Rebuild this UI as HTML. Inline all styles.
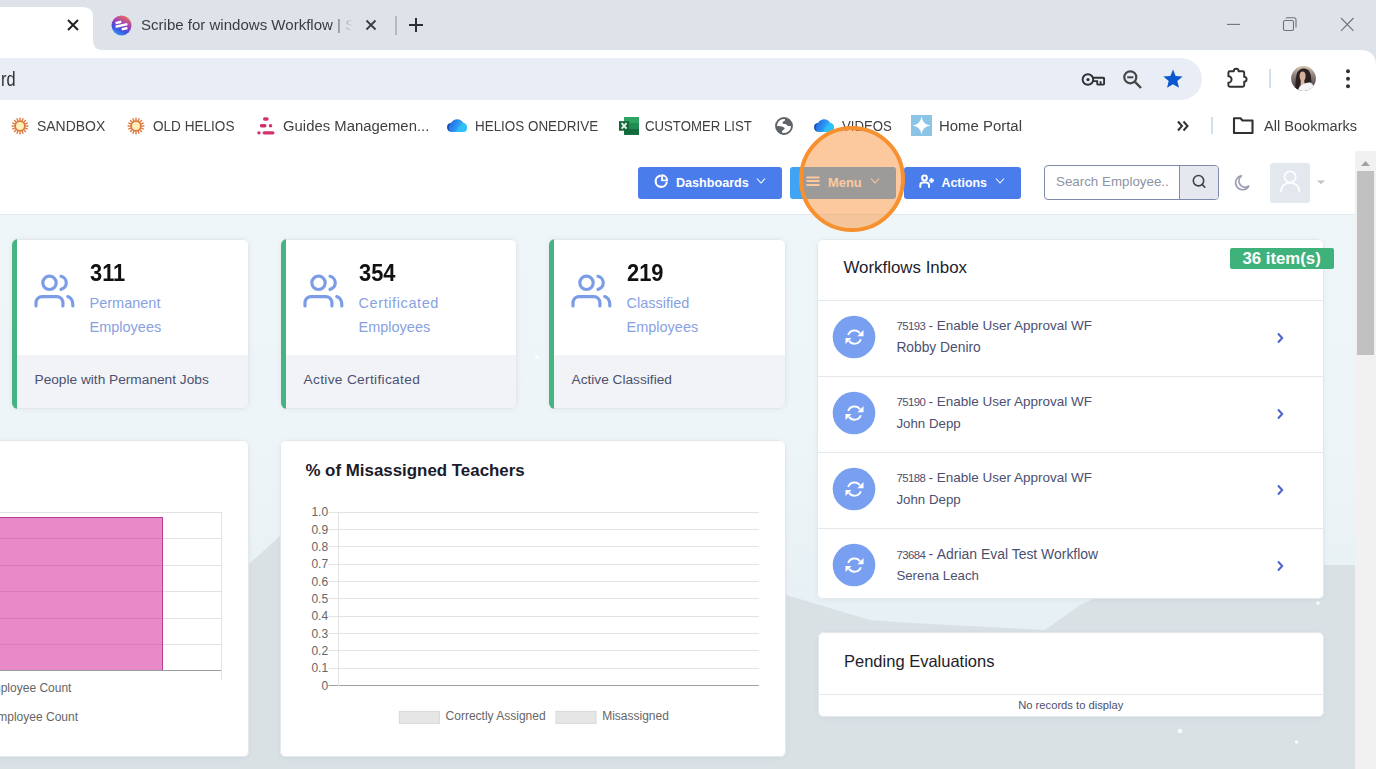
<!DOCTYPE html>
<html><head><meta charset="utf-8">
<style>
*{margin:0;padding:0;box-sizing:border-box}
html,body{width:1376px;height:769px;overflow:hidden;background:#fff;font-family:"Liberation Sans",sans-serif}
.a{position:absolute}
.nw{white-space:nowrap}
#tabs{left:0;top:0;width:1376px;height:50px;background:#dee3ea}
#omni{left:-30px;top:58px;width:1232px;height:42px;background:#e9eef6;border-radius:21px}
.bmt{font-size:15.2px;color:#3f3f3f;top:110.5px;line-height:30px;transform-origin:0 0}
#page{left:0;top:151px;width:1355px;height:618px;overflow:hidden;background:#e9f1f4}
#hdr{left:0;top:0;width:1355px;height:64px;background:#fff;border-bottom:1px solid #e3e9ee}
.btn{top:16px;height:31.5px;border-radius:3px}
.card{background:#fff;border-radius:6px;box-shadow:0 1px 4px rgba(120,140,160,.10)}
.card::after,.stat::after{content:"";position:absolute;left:0;top:0;right:0;bottom:0;border:1px solid #e4e8ec;border-radius:6px;pointer-events:none}
.stat{top:88px;height:169.5px;width:237px;overflow:hidden;border-radius:6px;background:#fff;box-shadow:0 0 5px rgba(120,140,160,.12)}
.stat .gb{left:0;top:0;width:5px;height:170px;background:#47b282;z-index:2}
.stat .ft{left:0;top:116px;width:240px;height:54px;background:#f2f3f6}
.stat .num{left:77.5px;top:20.5px;font-size:23px;font-weight:bold;color:#111;line-height:26px;transform:scaleX(0.95);transform-origin:0 0}
.stat .lbl{left:77.5px;top:52px;font-size:14.5px;color:#88a2df;line-height:24px}
.stat .ftt{left:22.5px;top:132px;font-size:13.7px;color:#4c5170;line-height:18px}
#sb{left:1355px;top:151px;width:21px;height:618px;background:#f1f1f1}
</style></head><body>
<!-- TAB STRIP -->
<div id="tabs" class="a"></div>
<svg class="a" style="left:0;top:0" width="120" height="51">
  <path d="M-10 50 L-10 17 Q-10 7 0 7 L83 7 Q93 7 93 17 L93 40 Q93 50 103 50 L108 50 L108 51 L-10 51 Z" fill="#fff"/>
</svg>
<svg class="a" style="left:66px;top:18px" width="14" height="14" viewBox="0 0 14 14"><path d="M2 2 L12 12 M12 2 L2 12" stroke="#1f1f1f" stroke-width="1.9"/></svg>
<svg class="a" style="left:110.5px;top:14.5px" width="21" height="21" viewBox="0 0 21 21">
  <defs><linearGradient id="sg" x1="0.8" y1="0.05" x2="0.35" y2="0.95"><stop offset="0" stop-color="#f07050"/><stop offset="0.45" stop-color="#9b3fc0"/><stop offset="0.75" stop-color="#3f52df"/><stop offset="1" stop-color="#3a8af0"/></linearGradient></defs>
  <circle cx="10.5" cy="10.5" r="10" fill="url(#sg)"/>
  <path d="M4.6 8.1 L10.3 6.7 M4.6 11.7 L16.4 9.1 M10.7 14.4 L16.4 13" stroke="#fff" stroke-width="2.5"/>
</svg>
<div class="a nw" style="left:140.7px;top:15.4px;font-size:15.5px;color:#3b3c3f;line-height:20px;width:220px;overflow:hidden;transform:scaleX(0.97);transform-origin:0 0;-webkit-mask-image:linear-gradient(90deg,#000 196px,transparent 218px)">Scribe for windows Workflow | Scribe</div>
<svg class="a" style="left:364px;top:18px" width="14" height="14" viewBox="0 0 14 14"><path d="M2.5 2.5 L11.5 11.5 M11.5 2.5 L2.5 11.5" stroke="#3c3d40" stroke-width="1.8"/></svg>
<div class="a" style="left:395px;top:16px;width:1.5px;height:19px;background:#b4b9c1"></div>
<svg class="a" style="left:408px;top:17px" width="16" height="16" viewBox="0 0 16 16"><path d="M8 1 L8 15 M1 8 L15 8" stroke="#2e2f32" stroke-width="2"/></svg>
<svg class="a" style="left:1220px;top:10px" width="140" height="30" viewBox="0 0 140 30">
  <path d="M7 14.4 H20" stroke="#6f7276" stroke-width="1.1"/>
  <rect x="63.5" y="10.5" width="10" height="10" rx="1.5" fill="none" stroke="#6f7276" stroke-width="1.1"/>
  <path d="M66 8.2 Q66 7.8 67.5 7.8 H74 Q76 7.8 76 9.8 V17.5" fill="none" stroke="#6f7276" stroke-width="1.1"/>
  <path d="M121 8 L133.5 20.8 M133.5 8 L121 20.8" stroke="#6f7276" stroke-width="1.1"/>
</svg>
<!-- TOOLBAR -->
<div id="omni" class="a"></div>
<div class="a nw" style="left:0.6px;top:67.1px;font-size:19.5px;color:#303030;line-height:24px;transform:scaleX(0.84);transform-origin:0 0">rd</div>
<svg class="a" style="left:1076px;top:66px" width="34" height="28" viewBox="1076 66 34 28">
  <circle cx="1087.9" cy="79.5" r="5.3" fill="none" stroke="#2f3033" stroke-width="1.9"/>
  <circle cx="1088" cy="79.6" r="1.6" fill="#2f3033"/>
  <path d="M1092.6 77.7 H1103.3 Q1104.1 77.7 1104.1 78.5 V83.8 Q1104.1 84.6 1103.3 84.6 H1098 Q1097.2 84.6 1097.2 83.8 V81.1 H1092.6 M1100.6 81.3 V84" fill="none" stroke="#2f3033" stroke-width="1.9"/>
</svg>
<svg class="a" style="left:1122px;top:69px" width="22" height="22" viewBox="0 0 22 22">
  <circle cx="8.3" cy="8.3" r="6" fill="none" stroke="#444746" stroke-width="2.2"/>
  <path d="M5.2 8.3 H11.4" stroke="#444746" stroke-width="2"/>
  <path d="M12.7 12.7 L19 19" stroke="#444746" stroke-width="2.4"/>
</svg>
<svg class="a" style="left:1162px;top:68px" width="22" height="22" viewBox="0 0 24 24">
  <path d="M12 1.5 L14.9 8.6 L22.5 9.2 L16.7 14.1 L18.5 21.6 L12 17.6 L5.5 21.6 L7.3 14.1 L1.5 9.2 L9.1 8.6 Z" fill="#0b57d0"/>
</svg>
<svg class="a" style="left:1220px;top:62px" width="36" height="32" viewBox="1220 62 36 32">
  <path d="M1229.9 71.2 H1233.8 A2.4 2.4 0 0 1 1238.6 71.2 H1242.7 Q1244.2 71.2 1244.2 72.7 V76.9 A2.4 2.4 0 0 1 1244.2 81.7 V85.2 Q1244.2 86.7 1242.7 86.7 H1229.9 Q1228.4 86.7 1228.4 85.2 V82.6 A3.2 3.2 0 0 0 1228.4 76.2 V72.7 Q1228.4 71.2 1229.9 71.2 Z" fill="none" stroke="#2f3033" stroke-width="1.9" stroke-linejoin="round"/>
</svg>
<div class="a" style="left:1269px;top:69px;width:2px;height:19px;background:#d3deef"></div>
<svg class="a" style="left:1291px;top:66px" width="25" height="25" viewBox="0 0 25 25">
  <defs><clipPath id="av"><circle cx="12.5" cy="12.5" r="12.4"/></clipPath>
  <linearGradient id="avb" x1="0" y1="0" x2="0" y2="1"><stop offset="0" stop-color="#d2c4ac"/><stop offset="0.4" stop-color="#8a7d78"/><stop offset="1" stop-color="#3f3a3c"/></linearGradient></defs>
  <g clip-path="url(#av)">
    <rect width="25" height="25" fill="url(#avb)"/>
    <path d="M4.5 24 Q4 14 6 7 Q8.5 2.2 13 2.4 Q18.5 2.8 19.8 9 Q20.5 14 20.3 18.5 L15 21 L8 24 Z" fill="#2b1f1f"/>
    <ellipse cx="11.6" cy="9.9" rx="3" ry="4.5" fill="#d6b09a"/>
    <path d="M9.8 13 L13.2 13 L13.6 18 L9.6 19 Z" fill="#d9b7a4"/>
    <path d="M6.5 26 Q8 19.5 11.5 18.3 Q16 16 19.5 16.5 Q23.5 19 25 26 Z" fill="#f4f4f6"/>
  </g>
</svg>
<svg class="a" style="left:1343px;top:68px" width="10" height="22" viewBox="0 0 10 22">
  <circle cx="5" cy="3.3" r="2" fill="#303134"/><circle cx="5" cy="10.8" r="2" fill="#303134"/><circle cx="5" cy="18.3" r="2" fill="#303134"/>
</svg>
<svg class="a" style="left:1330px;top:50px" width="46" height="20"><path d="M30 0 Q46 0 46 16 V0 Z" fill="#dee3ea"/></svg>
<!-- BOOKMARKS -->
<svg class="a" style="left:11px;top:117px" width="18" height="18" viewBox="0 0 18 18"><g fill="#dc7a40"><rect x="8.3" y="0.6" width="1.4" height="3" transform="rotate(0.0 9 9)"/><rect x="8.3" y="0.6" width="1.4" height="3" transform="rotate(22.5 9 9)"/><rect x="8.3" y="0.6" width="1.4" height="3" transform="rotate(45.0 9 9)"/><rect x="8.3" y="0.6" width="1.4" height="3" transform="rotate(67.5 9 9)"/><rect x="8.3" y="0.6" width="1.4" height="3" transform="rotate(90.0 9 9)"/><rect x="8.3" y="0.6" width="1.4" height="3" transform="rotate(112.5 9 9)"/><rect x="8.3" y="0.6" width="1.4" height="3" transform="rotate(135.0 9 9)"/><rect x="8.3" y="0.6" width="1.4" height="3" transform="rotate(157.5 9 9)"/><rect x="8.3" y="0.6" width="1.4" height="3" transform="rotate(180.0 9 9)"/><rect x="8.3" y="0.6" width="1.4" height="3" transform="rotate(202.5 9 9)"/><rect x="8.3" y="0.6" width="1.4" height="3" transform="rotate(225.0 9 9)"/><rect x="8.3" y="0.6" width="1.4" height="3" transform="rotate(247.5 9 9)"/><rect x="8.3" y="0.6" width="1.4" height="3" transform="rotate(270.0 9 9)"/><rect x="8.3" y="0.6" width="1.4" height="3" transform="rotate(292.5 9 9)"/><rect x="8.3" y="0.6" width="1.4" height="3" transform="rotate(315.0 9 9)"/><rect x="8.3" y="0.6" width="1.4" height="3" transform="rotate(337.5 9 9)"/></g><circle cx="9" cy="9" r="4.9" fill="#fcefb8" stroke="#dc7a40" stroke-width="1.8"/></svg>
<div class="a nw bmt" style="left:37.0px;transform:scaleX(0.919)">SANDBOX</div>
<svg class="a" style="left:126.5px;top:117px" width="18" height="18" viewBox="0 0 18 18"><g fill="#dc7a40"><rect x="8.3" y="0.6" width="1.4" height="3" transform="rotate(0.0 9 9)"/><rect x="8.3" y="0.6" width="1.4" height="3" transform="rotate(22.5 9 9)"/><rect x="8.3" y="0.6" width="1.4" height="3" transform="rotate(45.0 9 9)"/><rect x="8.3" y="0.6" width="1.4" height="3" transform="rotate(67.5 9 9)"/><rect x="8.3" y="0.6" width="1.4" height="3" transform="rotate(90.0 9 9)"/><rect x="8.3" y="0.6" width="1.4" height="3" transform="rotate(112.5 9 9)"/><rect x="8.3" y="0.6" width="1.4" height="3" transform="rotate(135.0 9 9)"/><rect x="8.3" y="0.6" width="1.4" height="3" transform="rotate(157.5 9 9)"/><rect x="8.3" y="0.6" width="1.4" height="3" transform="rotate(180.0 9 9)"/><rect x="8.3" y="0.6" width="1.4" height="3" transform="rotate(202.5 9 9)"/><rect x="8.3" y="0.6" width="1.4" height="3" transform="rotate(225.0 9 9)"/><rect x="8.3" y="0.6" width="1.4" height="3" transform="rotate(247.5 9 9)"/><rect x="8.3" y="0.6" width="1.4" height="3" transform="rotate(270.0 9 9)"/><rect x="8.3" y="0.6" width="1.4" height="3" transform="rotate(292.5 9 9)"/><rect x="8.3" y="0.6" width="1.4" height="3" transform="rotate(315.0 9 9)"/><rect x="8.3" y="0.6" width="1.4" height="3" transform="rotate(337.5 9 9)"/></g><circle cx="9" cy="9" r="4.9" fill="#fcefb8" stroke="#dc7a40" stroke-width="1.8"/></svg>
<div class="a nw bmt" style="left:153.1px;transform:scaleX(0.894)">OLD HELIOS</div>
<svg class="a" style="left:250px;top:110px" width="30" height="30" viewBox="250 110 30 30">
  <g stroke="#d5306e" stroke-linecap="round" stroke-width="3.4"><path d="M264.65 119 H267"/><path d="M261.55 125.8 H264.85 M270.5 125.8 H270.6"/><path d="M258.9 132.85 H259 M264.25 132.85 H272.85"/></g>
</svg>
<div class="a nw bmt" style="left:282.6px;transform:scaleX(0.979)">Guides Managemen...</div>
<svg class="a" style="left:446px;top:118px" width="22" height="15" viewBox="0 0 22 15">
  <defs><linearGradient id="od1" x1="0" y1="0" x2="1" y2="0.3"><stop offset="0" stop-color="#1f5ad6"/><stop offset="0.5" stop-color="#2a8bf0"/><stop offset="1" stop-color="#33c6f6"/></linearGradient></defs>
  <path d="M6.5 14 Q1.2 14 1.2 9.2 Q1.2 5.6 4.8 5 Q7.2 1.2 11.2 1.2 Q15.2 1.2 17.2 4.8 Q21 5.8 21 9.8 Q21 14 16.6 14 Z" fill="url(#od1)"/>
  <path d="M10 14 Q11.5 8.5 17.2 4.8 Q21 5.8 21 9.8 Q21 14 16.6 14 Z" fill="#2fc0f6" opacity="0.8"/>
  <path d="M4.8 5 Q2.5 6.5 2.5 10 Q2.8 12.5 4.5 13.5 Q1.2 13 1.2 9.2 Q1.2 5.6 4.8 5Z" fill="#173f9e" opacity="0.8"/>
</svg>
<div class="a nw bmt" style="left:474.6px;transform:scaleX(0.884)">HELIOS ONEDRIVE</div>
<svg class="a" style="left:618px;top:115px" width="22" height="21" viewBox="0 0 22 21">
  <rect x="6.1" y="2" width="14.9" height="17.8" fill="#1d7f4a"/>
  <rect x="6.1" y="2" width="14.9" height="6" fill="#2ea363"/>
  <rect x="6.1" y="8" width="14.9" height="6" fill="#1f8c52"/>
  <rect x="6.1" y="14" width="14.9" height="5.8" fill="#136b3c"/>
  <rect x="1" y="6.1" width="10.2" height="9.6" fill="#17663a"/>
  <path d="M3.6 8.2 L8.6 13.6 M8.6 8.2 L3.6 13.6" stroke="#e9f5ec" stroke-width="1.9"/>
</svg>
<div class="a nw bmt" style="left:645.1px;transform:scaleX(0.869)">CUSTOMER LIST</div>
<svg class="a" style="left:774px;top:116px" width="20" height="20" viewBox="0 0 20 20">
  <circle cx="10" cy="10" r="8" fill="none" stroke="#5f6368" stroke-width="1.9"/>
  <path d="M11.3 2.6 L10.6 5.1 Q9 5.5 8.6 6.1 Q8.2 7.5 9.8 8 L11.6 8 Q13 8.4 13.4 9.8 L17.8 10.2 A8 8 0 0 0 11.3 2.6 Z" fill="#5f6368"/>
  <path d="M2.2 10.2 Q5 9.6 8 10.6 L10.2 11.6 Q11 12.6 10.4 13.2 Q8.5 14 8 15.6 L8 17.8 A8 8 0 0 1 2.2 10.2 Z" fill="#5f6368"/>
</svg>
<svg class="a" style="left:813px;top:118px" width="22" height="15" viewBox="0 0 22 15">
  <defs><linearGradient id="od2" x1="0" y1="0" x2="1" y2="0.3"><stop offset="0" stop-color="#1f5ad6"/><stop offset="0.5" stop-color="#2a8bf0"/><stop offset="1" stop-color="#33c6f6"/></linearGradient></defs>
  <path d="M6.5 14 Q1.2 14 1.2 9.2 Q1.2 5.6 4.8 5 Q7.2 1.2 11.2 1.2 Q15.2 1.2 17.2 4.8 Q21 5.8 21 9.8 Q21 14 16.6 14 Z" fill="url(#od2)"/>
  <path d="M10 14 Q11.5 8.5 17.2 4.8 Q21 5.8 21 9.8 Q21 14 16.6 14 Z" fill="#2fc0f6" opacity="0.8"/>
  <path d="M4.8 5 Q2.5 6.5 2.5 10 Q2.8 12.5 4.5 13.5 Q1.2 13 1.2 9.2 Q1.2 5.6 4.8 5Z" fill="#173f9e" opacity="0.8"/>
</svg>
<div class="a nw bmt" style="left:842.0px;transform:scaleX(0.867)">VIDEOS</div>
<svg class="a" style="left:911px;top:115px" width="21" height="21" viewBox="0 0 21 21">
  <rect width="21" height="21" fill="#8cc4e6"/>
  <path d="M10.5 1.5 Q11.5 9.5 19.5 10.5 Q11.5 11.5 10.5 19.5 Q9.5 11.5 1.5 10.5 Q9.5 9.5 10.5 1.5Z" fill="#fff"/>
</svg>
<div class="a nw bmt" style="left:939.0px;transform:scaleX(0.983)">Home Portal</div>
<svg class="a" style="left:1176px;top:119px" width="14" height="14" viewBox="0 0 14 14"><path d="M2 2.5 L6 7 L2 11.5 M7.5 2.5 L11.5 7 L7.5 11.5" fill="none" stroke="#303134" stroke-width="2"/></svg>
<div class="a" style="left:1211px;top:117px;width:2px;height:17px;background:#d3deef"></div>
<svg class="a" style="left:1232px;top:116px" width="23" height="19" viewBox="0 0 23 19">
  <path d="M2 2.2 H8.5 L10.5 4.5 H20.5 V17 H2 Z" fill="none" stroke="#303134" stroke-width="2.1" stroke-linejoin="round"/>
</svg>
<div class="a nw bmt" style="left:1264.4px;transform:scaleX(0.959)">All Bookmarks</div>
<div id="page" class="a">
  <svg class="a" style="left:0;top:0" width="1355" height="618" viewBox="0 0 1355 618">
    <defs>
      <linearGradient id="sky" x1="0" y1="0" x2="0" y2="1"><stop offset="0" stop-color="#eef6f8"/><stop offset="0.45" stop-color="#eef5f8"/><stop offset="0.75" stop-color="#e7f0f4"/><stop offset="1" stop-color="#e4eef3"/></linearGradient>
    </defs>
    <rect width="1355" height="618" fill="url(#sky)"/>
    <path d="M0 445 L250 412 L281 384 L540 300 L786 444 L870 469 L912 472 L1045 479 L1080 454 L1200 400 L1325 414 L1355 414 L1355 618 L0 618 Z" fill="#d9e1e5"/>
  <g fill="#fff" opacity="0.85"><circle cx="1180" cy="580" r="2.3"/><circle cx="1296.5" cy="591" r="1.7"/><circle cx="1318" cy="452" r="1.8"/><circle cx="537" cy="206" r="2"/></g>
  </svg>
  <div id="hdr" class="a"></div>
  <!-- header buttons -->
  <div class="a btn nw" style="left:638px;width:144px;background:#4a7cec"></div>
  <svg class="a" style="left:653px;top:22px" width="18" height="18" viewBox="0 0 18 18">
    <path d="M7.76 2.67 A5.6 5.6 0 1 0 13.83 8.74" fill="none" stroke="#fff" stroke-width="2.1"/>
    <path d="M9.1 2.3 V7.4 H14.2 A5.2 5.2 0 0 0 9.1 2.3 Z" fill="none" stroke="#fff" stroke-width="1.9" stroke-linejoin="round"/>
  </svg>
  <div class="a nw" style="left:676px;top:23px;font-size:12.6px;font-weight:bold;color:#fff;line-height:18px">Dashboards</div>
  <svg class="a" style="left:756px;top:26px" width="10" height="8" viewBox="0 0 10 8"><path d="M1 1.5 L5 6 L9 1.5" fill="none" stroke="#fff" stroke-width="1.1"/></svg>

  <div class="a btn nw" style="left:790px;width:106px;background:#41a3f4"></div>
  <svg class="a" style="left:805px;top:25px" width="16" height="11" viewBox="0 0 16 11"><path d="M1.5 1.4 H14.5 M1.5 5 H14.5 M1.5 8.9 H14.5" stroke="#fff" stroke-width="2"/></svg>
  <div class="a nw" style="left:828px;top:23px;font-size:12.9px;font-weight:bold;color:#fff;line-height:18px">Menu</div>
  <svg class="a" style="left:870px;top:26px" width="10" height="8" viewBox="0 0 10 8"><path d="M1 1.5 L5 6 L9 1.5" fill="none" stroke="#fff" stroke-width="1.1"/></svg>

  <div class="a btn nw" style="left:903.5px;width:117.5px;background:#4a7cec"></div>
  <svg class="a" style="left:916px;top:22px" width="20" height="17" viewBox="0 0 20 17">
    <circle cx="8.5" cy="5" r="2.4" fill="none" stroke="#fff" stroke-width="2"/>
    <path d="M4.3 14 V12.2 Q4.3 9.6 7 9.6 H10.3 Q13 9.6 13 12.2 V14" fill="none" stroke="#fff" stroke-width="2" stroke-linecap="round"/>
    <path d="M15.5 5 V10 M13 7.5 H18" stroke="#fff" stroke-width="2"/>
  </svg>
  <div class="a nw" style="left:941.5px;top:23px;font-size:12.4px;font-weight:bold;color:#fff;line-height:18px">Actions</div>
  <svg class="a" style="left:995px;top:26px" width="10" height="8" viewBox="0 0 10 8"><path d="M1 1.5 L5 6 L9 1.5" fill="none" stroke="#fff" stroke-width="1.1"/></svg>

  <!-- search -->
  <div class="a" style="left:1044px;top:14px;width:175px;height:35px;border:1.5px solid #7f8bab;border-radius:4px;background:#fff;overflow:hidden">
    <div class="a" style="left:134.2px;top:0;width:40px;height:34px;background:#e5e8ef;border-left:1.5px solid #7f8bab"></div>
  </div>
  <div class="a nw" style="left:1056px;top:22px;font-size:13.35px;color:#8e93a3;line-height:18px">Search Employee..</div>
  <svg class="a" style="left:1190px;top:21px" width="18" height="18" viewBox="0 0 18 18">
    <circle cx="8.5" cy="8.7" r="5.2" fill="none" stroke="#3f4246" stroke-width="1.6"/>
    <path d="M12.2 12.4 L14.8 15.2" stroke="#3f4246" stroke-width="1.6" stroke-linecap="round"/>
  </svg>
  <svg class="a" style="left:1232px;top:23px" width="20" height="18" viewBox="0 0 20 18">
    <path d="M9.5 1.8 A7 7 0 1 0 16.8 12 A5.6 5.6 0 0 1 9.5 1.8 Z" fill="none" stroke="#9c9fb4" stroke-width="1.6" stroke-linejoin="round"/>
  </svg>
  <div class="a" style="left:1270px;top:12px;width:40px;height:39.7px;background:#e3e8ef;border-radius:3px"></div>
  <svg class="a" style="left:1276px;top:15px" width="28" height="30" viewBox="0 0 28 30">
    <circle cx="14.1" cy="10.9" r="5.6" fill="none" stroke="#fff" stroke-width="1.7"/>
    <path d="M5 25.6 Q5.5 17 14.1 17 Q22.7 17 23.5 25.6" fill="none" stroke="#fff" stroke-width="1.7" stroke-linecap="round"/>
  </svg>
  <svg class="a" style="left:1316px;top:29px" width="10" height="5" viewBox="0 0 10 5"><path d="M1 0.5 H9 L5 4.2 Z" fill="#bfc3cb"/></svg>

  <!-- stat cards -->
  <div class="a stat" style="left:12px">
    <div class="a ft"></div><div class="a gb"></div>
    <svg class="a" style="left:16px;top:23px" width="52" height="52" viewBox="0 0 52 52"><g fill="none" stroke="#7c9de6" stroke-width="3.2" stroke-linecap="round"><circle cx="21.5" cy="20.8" r="6.7"/><path d="M33 14.3 A6.7 6.7 0 0 1 33 27.4"/><path d="M8 44 V40.6 A6 6 0 0 1 14 34.6 H28.9 A6 6 0 0 1 34.9 40.6 V44"/><path d="M39.8 34.6 Q44.8 36.5 44.8 42.5 V44"/></g></svg>
    <div class="a num nw">311</div>
    <div class="a lbl nw">Permanent<br>Employees</div>
    <div class="a ftt nw">People with Permanent Jobs</div>
  </div>
  <div class="a stat" style="left:281px;width:236px">
    <div class="a ft"></div><div class="a gb"></div>
    <svg class="a" style="left:16px;top:23px" width="52" height="52" viewBox="0 0 52 52"><g fill="none" stroke="#7c9de6" stroke-width="3.2" stroke-linecap="round"><circle cx="21.5" cy="20.8" r="6.7"/><path d="M33 14.3 A6.7 6.7 0 0 1 33 27.4"/><path d="M8 44 V40.6 A6 6 0 0 1 14 34.6 H28.9 A6 6 0 0 1 34.9 40.6 V44"/><path d="M39.8 34.6 Q44.8 36.5 44.8 42.5 V44"/></g></svg>
    <div class="a num nw">354</div>
    <div class="a lbl nw"><span style="letter-spacing:0.6px">Certificated</span><br>Employees</div>
    <div class="a ftt nw" style="letter-spacing:0.33px">Active Certificated</div>
  </div>
  <div class="a stat" style="left:549px">
    <div class="a ft"></div><div class="a gb"></div>
    <svg class="a" style="left:16px;top:23px" width="52" height="52" viewBox="0 0 52 52"><g fill="none" stroke="#7c9de6" stroke-width="3.2" stroke-linecap="round"><circle cx="21.5" cy="20.8" r="6.7"/><path d="M33 14.3 A6.7 6.7 0 0 1 33 27.4"/><path d="M8 44 V40.6 A6 6 0 0 1 14 34.6 H28.9 A6 6 0 0 1 34.9 40.6 V44"/><path d="M39.8 34.6 Q44.8 36.5 44.8 42.5 V44"/></g></svg>
    <div class="a num nw">219</div>
    <div class="a lbl nw">Classified<br>Employees</div>
    <div class="a ftt nw">Active Classified</div>
  </div>
<div class="a card" style="left:817.4px;top:87.6px;width:506.8px;height:360.8px;overflow:hidden">
<div class="a nw" style="left:26px;top:18px;font-size:16.9px;color:#1d1d2b;line-height:22px">Workflows Inbox</div>
<div class="a" style="left:0;top:61.3px;width:507px;height:1px;background:#e6e8ee"></div>
<svg class="a" style="left:15px;top:76.7px" width="44" height="44" viewBox="0 0 44 44"><circle cx="22" cy="22" r="21.3" fill="#79a0f0"/><g transform="translate(22.5 22.1)"><path d="M-6.3 -2.1 A6.6 6.6 0 0 1 5.4 -3.8" fill="none" stroke="#fff" stroke-width="1.9"/><path d="M9 -7 V-0.9 H2.9 Z" fill="#fff"/><path d="M6.3 2.1 A6.6 6.6 0 0 1 -5.4 3.8" fill="none" stroke="#fff" stroke-width="1.9"/><path d="M-9 7 V0.9 H-2.9 Z" fill="#fff"/></g></svg>
<div class="a nw" style="left:79px;top:77.5px;font-size:13.5px;color:#4c5070;line-height:20px"><span style="display:inline-block;width:28.4px;font-size:11.4px;letter-spacing:-0.55px">75193</span><span style="display:inline-block;width:12px;text-align:center">-</span>Enable User Approval WF</div>
<div class="a nw" style="left:79px;top:99.2px;font-size:13.8px;color:#4c5070;line-height:20px">Robby Deniro</div>
<svg class="a" style="left:457.2px;top:93.5px" width="10" height="12" viewBox="0 0 10 12"><path d="M3 1.5 L7.2 6 L3 10.5" fill="none" stroke="#4a64c8" stroke-width="2"/></svg>
<div class="a" style="left:0;top:137.3px;width:507px;height:1px;background:#e6e8ee"></div>
<svg class="a" style="left:15px;top:152.7px" width="44" height="44" viewBox="0 0 44 44"><circle cx="22" cy="22" r="21.3" fill="#79a0f0"/><g transform="translate(22.5 22.1)"><path d="M-6.3 -2.1 A6.6 6.6 0 0 1 5.4 -3.8" fill="none" stroke="#fff" stroke-width="1.9"/><path d="M9 -7 V-0.9 H2.9 Z" fill="#fff"/><path d="M6.3 2.1 A6.6 6.6 0 0 1 -5.4 3.8" fill="none" stroke="#fff" stroke-width="1.9"/><path d="M-9 7 V0.9 H-2.9 Z" fill="#fff"/></g></svg>
<div class="a nw" style="left:79px;top:153.5px;font-size:13.5px;color:#4c5070;line-height:20px"><span style="display:inline-block;width:28.4px;font-size:11.4px;letter-spacing:-0.55px">75190</span><span style="display:inline-block;width:12px;text-align:center">-</span>Enable User Approval WF</div>
<div class="a nw" style="left:79px;top:175.2px;font-size:13.3px;color:#4c5070;line-height:20px">John Depp</div>
<svg class="a" style="left:457.2px;top:169.5px" width="10" height="12" viewBox="0 0 10 12"><path d="M3 1.5 L7.2 6 L3 10.5" fill="none" stroke="#4a64c8" stroke-width="2"/></svg>
<div class="a" style="left:0;top:213.3px;width:507px;height:1px;background:#e6e8ee"></div>
<svg class="a" style="left:15px;top:228.7px" width="44" height="44" viewBox="0 0 44 44"><circle cx="22" cy="22" r="21.3" fill="#79a0f0"/><g transform="translate(22.5 22.1)"><path d="M-6.3 -2.1 A6.6 6.6 0 0 1 5.4 -3.8" fill="none" stroke="#fff" stroke-width="1.9"/><path d="M9 -7 V-0.9 H2.9 Z" fill="#fff"/><path d="M6.3 2.1 A6.6 6.6 0 0 1 -5.4 3.8" fill="none" stroke="#fff" stroke-width="1.9"/><path d="M-9 7 V0.9 H-2.9 Z" fill="#fff"/></g></svg>
<div class="a nw" style="left:79px;top:229.5px;font-size:13.5px;color:#4c5070;line-height:20px"><span style="display:inline-block;width:28.4px;font-size:11.4px;letter-spacing:-0.55px">75188</span><span style="display:inline-block;width:12px;text-align:center">-</span>Enable User Approval WF</div>
<div class="a nw" style="left:79px;top:251.2px;font-size:13.3px;color:#4c5070;line-height:20px">John Depp</div>
<svg class="a" style="left:457.2px;top:245.5px" width="10" height="12" viewBox="0 0 10 12"><path d="M3 1.5 L7.2 6 L3 10.5" fill="none" stroke="#4a64c8" stroke-width="2"/></svg>
<div class="a" style="left:0;top:289.3px;width:507px;height:1px;background:#e6e8ee"></div>
<svg class="a" style="left:15px;top:304.7px" width="44" height="44" viewBox="0 0 44 44"><circle cx="22" cy="22" r="21.3" fill="#79a0f0"/><g transform="translate(22.5 22.1)"><path d="M-6.3 -2.1 A6.6 6.6 0 0 1 5.4 -3.8" fill="none" stroke="#fff" stroke-width="1.9"/><path d="M9 -7 V-0.9 H2.9 Z" fill="#fff"/><path d="M6.3 2.1 A6.6 6.6 0 0 1 -5.4 3.8" fill="none" stroke="#fff" stroke-width="1.9"/><path d="M-9 7 V0.9 H-2.9 Z" fill="#fff"/></g></svg>
<div class="a nw" style="left:79px;top:305.5px;font-size:13.95px;color:#4c5070;line-height:20px"><span style="display:inline-block;width:28.4px;font-size:11.4px;letter-spacing:-0.55px">73684</span><span style="display:inline-block;width:12px;text-align:center">-</span>Adrian Eval Test Workflow</div>
<div class="a nw" style="left:79px;top:327.2px;font-size:13.27px;color:#4c5070;line-height:20px">Serena Leach</div>
<svg class="a" style="left:457.2px;top:321.5px" width="10" height="12" viewBox="0 0 10 12"><path d="M3 1.5 L7.2 6 L3 10.5" fill="none" stroke="#4a64c8" stroke-width="2"/></svg>
</div>
<div class="a nw" style="left:1229.6px;top:97.4px;width:104px;height:21px;background:#3fb27b;border-radius:2px;color:#fff;font-weight:bold;font-size:16.8px;line-height:21px;text-align:center">36 item(s)</div>
<div class="a card" style="left:817.5px;top:480.7px;width:506.5px;height:85.1px;overflow:hidden">
<div class="a nw" style="left:26.5px;top:18px;font-size:16.5px;color:#1d1d2b;line-height:22px">Pending Evaluations</div>
<div class="a" style="left:0;top:61.9px;width:507px;height:1px;background:#e6e8ee"></div>
<div class="a nw" style="left:0;top:65px;width:506.5px;text-align:center;font-size:11.2px;color:#4c5070;line-height:16px">No records to display</div>
</div>
<div class="a card" style="left:-30px;top:288.5px;width:279px;height:317px;overflow:hidden">
<svg class="a" style="left:0;top:0" width="279" height="317">
<path d="M0 72.5 H252" stroke="#e2e2e2" stroke-width="1"/>
<path d="M0 98.5 H252" stroke="#e2e2e2" stroke-width="1"/>
<path d="M0 125.5 H252" stroke="#e2e2e2" stroke-width="1"/>
<path d="M0 151.5 H252" stroke="#e2e2e2" stroke-width="1"/>
<path d="M0 178.5 H252" stroke="#e2e2e2" stroke-width="1"/>
<path d="M0 204.5 H252" stroke="#e2e2e2" stroke-width="1"/>
<rect x="-1" y="77.5" width="193.5" height="153" fill="#e889c8" stroke="#b53d98" stroke-width="1"/>
<path d="M0 98.5 H192" stroke="#c86aaf" stroke-width="1" opacity="0.45"/>
<path d="M0 125.5 H192" stroke="#c86aaf" stroke-width="1" opacity="0.45"/>
<path d="M0 151.5 H192" stroke="#c86aaf" stroke-width="1" opacity="0.45"/>
<path d="M0 178.5 H192" stroke="#c86aaf" stroke-width="1" opacity="0.45"/>
<path d="M0 204.5 H192" stroke="#c86aaf" stroke-width="1" opacity="0.45"/>
<path d="M0 230.5 H252" stroke="#9a9a9a" stroke-width="1"/>
<path d="M251.5 72 V240" stroke="#e2e2e2" stroke-width="1"/>
</svg>
<div class="a nw" style="right:177.6px;top:240px;font-size:12px;color:#666;line-height:16px">Employee Count</div>
<div class="a nw" style="right:171px;top:269px;font-size:12px;color:#666;line-height:16px">Employee Count</div>
</div>
<div class="a card" style="left:280.4px;top:288.5px;width:506px;height:317.2px;overflow:hidden">
<div class="a nw" style="left:25px;top:19px;font-size:16.9px;font-weight:bold;color:#1b1b2b;line-height:24px">% of Misassigned Teachers</div>
<div class="a nw" style="left:0;width:47.7px;text-align:right;top:64.8px;font-size:12px;color:#666;line-height:16px">1.0</div>
<div class="a nw" style="left:0;width:47.7px;text-align:right;top:82.1px;font-size:12px;color:#666;line-height:16px">0.9</div>
<div class="a nw" style="left:0;width:47.7px;text-align:right;top:99.4px;font-size:12px;color:#666;line-height:16px">0.8</div>
<div class="a nw" style="left:0;width:47.7px;text-align:right;top:116.8px;font-size:12px;color:#666;line-height:16px">0.7</div>
<div class="a nw" style="left:0;width:47.7px;text-align:right;top:134.1px;font-size:12px;color:#666;line-height:16px">0.6</div>
<div class="a nw" style="left:0;width:47.7px;text-align:right;top:151.4px;font-size:12px;color:#666;line-height:16px">0.5</div>
<div class="a nw" style="left:0;width:47.7px;text-align:right;top:168.7px;font-size:12px;color:#666;line-height:16px">0.4</div>
<div class="a nw" style="left:0;width:47.7px;text-align:right;top:186.0px;font-size:12px;color:#666;line-height:16px">0.3</div>
<div class="a nw" style="left:0;width:47.7px;text-align:right;top:203.4px;font-size:12px;color:#666;line-height:16px">0.2</div>
<div class="a nw" style="left:0;width:47.7px;text-align:right;top:220.7px;font-size:12px;color:#666;line-height:16px">0.1</div>
<div class="a nw" style="left:0;width:47.7px;text-align:right;top:238.0px;font-size:12px;color:#666;line-height:16px">0</div>
<svg class="a" style="left:0;top:0" width="506" height="317">
<path d="M48.5 72.5 H478.8" stroke="#e3e3e3" stroke-width="1"/>
<path d="M48.5 89.5 H478.8" stroke="#e3e3e3" stroke-width="1"/>
<path d="M48.5 106.5 H478.8" stroke="#e3e3e3" stroke-width="1"/>
<path d="M48.5 124.5 H478.8" stroke="#e3e3e3" stroke-width="1"/>
<path d="M48.5 141.5 H478.8" stroke="#e3e3e3" stroke-width="1"/>
<path d="M48.5 158.5 H478.8" stroke="#e3e3e3" stroke-width="1"/>
<path d="M48.5 176.5 H478.8" stroke="#e3e3e3" stroke-width="1"/>
<path d="M48.5 193.5 H478.8" stroke="#e3e3e3" stroke-width="1"/>
<path d="M48.5 210.5 H478.8" stroke="#e3e3e3" stroke-width="1"/>
<path d="M48.5 228.5 H478.8" stroke="#e3e3e3" stroke-width="1"/>
<path d="M48.5 245.5 H478.8" stroke="#a0a0a0" stroke-width="1"/>
<path d="M58.5 72.8 V246.0" stroke="#e3e3e3" stroke-width="1"/>
<rect x="119.4" y="271.4" width="40" height="12" fill="#e6e6e6" stroke="#d9d9d9" stroke-width="1"/>
<rect x="276.0" y="271.4" width="40" height="12" fill="#e6e6e6" stroke="#d9d9d9" stroke-width="1"/>
</svg>
<div class="a nw" style="left:165.2px;top:268.5px;font-size:12px;color:#666;line-height:16px">Correctly Assigned</div>
<div class="a nw" style="left:321.8px;top:268.5px;font-size:12px;color:#666;line-height:16px">Misassigned</div>
</div>
</div>
<div id="sb" class="a">
  <svg class="a" style="left:0;top:0" width="21" height="20"><path d="M6 15 L10.5 10 L15 15 Z" fill="#a3a3a3"/></svg>
  <div class="a" style="left:2px;top:20px;width:17px;height:184px;background:#c1c1c1"></div>
</div>
<div class="a" style="left:799.3px;top:125.7px;width:106px;height:106px;border-radius:50%;border:4px solid #f7902f;background:rgba(249,148,62,0.5)"></div>
</body></html>
